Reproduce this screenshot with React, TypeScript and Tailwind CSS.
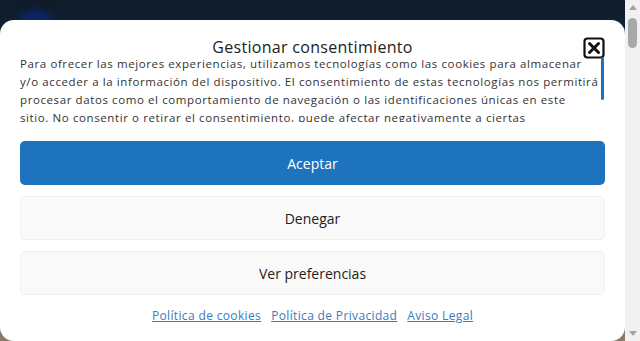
import React from 'react';

const font = { fontFamily: '"Open Sans", "Noto Sans", sans-serif' };

const bodyStart =
  'Para ofrecer las mejores experiencias, utilizamos tecnologías como las cookies para almacenar y/o acceder a la información del dispositivo. El consentimiento de estas tecnologías nos permitirá procesar datos como el comportamiento de navegación o las identificaciones únicas en este';
const bodyEnd =
  'sitio. No consentir o retirar el consentimiento, puede afectar negativamente a ciertas características y funciones.';

const links = ['Política de cookies', 'Política de Privacidad', 'Aviso Legal'];

function CloseIcon() {
  return (
    <svg width="22" height="22" viewBox="0 0 22 22" aria-hidden>
      <rect x="1.5" y="1.5" width="19" height="19" rx="3" fill="none" stroke="#111" strokeWidth="2.2" />
      <path d="M6.5 6.5 L15.5 15.5 M15.5 6.5 L6.5 15.5" stroke="#111" strokeWidth="3" strokeLinecap="round" />
    </svg>
  );
}

function PageScrollbar() {
  return (
    <div className="flex h-full w-[15px] shrink-0 flex-col items-center bg-[#f1f1f1]">
      <div className="mt-[5px] h-0 w-0 border-x-[4px] border-b-[5px] border-x-transparent border-b-[#a3a3a3]" />
      <div className="mt-[8px] h-[30px] w-[9px] rounded-full bg-[#a8a8a8]" />
      <div className="flex-1" />
      <div className="mb-[5px] h-0 w-0 border-x-[4px] border-t-[5px] border-x-transparent border-t-[#a3a3a3]" />
    </div>
  );
}

export default function App() {
  return (
    <div className="flex h-[341px] w-full overflow-hidden" style={font}>
      <div className="relative flex-1 bg-[#8c7a68]">
        <div className="h-[60px] bg-gradient-to-b from-[#0f1b29] to-[#132a3d]" />
        <div className="absolute left-[16px] top-[10px] h-[40px] w-[40px] rounded-full bg-[#0a2566] blur-[3px]" />

        <div className="absolute inset-x-0 bottom-0 top-[20px] flex flex-col rounded-[14px] bg-white px-[20px]">
          <div className="relative pt-[17px]">
            <h2 className="text-center text-[16px] leading-[20px] tracking-[0.3px] text-[#222]">
              Gestionar consentimiento
            </h2>
            <button type="button" className="absolute right-0 top-[17px]" aria-label="Cerrar">
              <CloseIcon />
            </button>
          </div>

          <div className="relative mt-[-2px] h-[67px] overflow-hidden pr-[5px]">
            <p className="text-[11.5px] leading-[18px] tracking-[0.6px] text-[#333]">
              {bodyStart}
              <br />
              {bodyEnd}
            </p>
            <div className="absolute right-[1px] top-[2px] h-[43px] w-[3px] rounded-full bg-[#1e73be]" />
          </div>

          <div className="mt-[19px] flex flex-col gap-[11px]">
            <button type="button" className="h-[44px] rounded-[5px] bg-[#1e73be] text-[14px] text-white">
              Aceptar
            </button>
            <button
              type="button"
              className="h-[44px] rounded-[5px] border border-[#f0f0f0] bg-[#f9f9f9] text-[14px] text-[#222]"
            >
              Denegar
            </button>
            <button
              type="button"
              className="h-[44px] rounded-[5px] border border-[#f0f0f0] bg-[#f9f9f9] text-[14px] text-[#222]"
            >
              Ver preferencias
            </button>
          </div>

          <div className="mt-[12px] flex justify-center gap-[10px]">
            {links.map((l) => (
              <a key={l} href="#" className="text-[12px] leading-[18px] tracking-[0.35px] text-[#3a7bbf] underline">
                {l}
              </a>
            ))}
          </div>
        </div>
      </div>
      <PageScrollbar />
    </div>
  );
}
